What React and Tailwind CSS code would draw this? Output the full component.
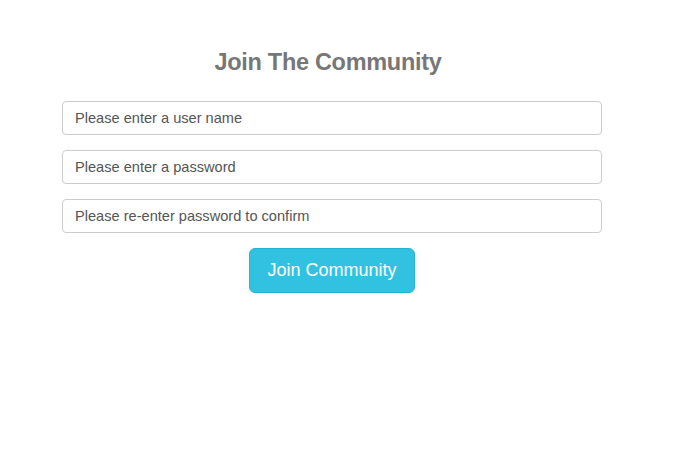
import React from 'react';

const fields = [
    'Please enter a user name',
    'Please enter a password',
    'Please re-enter password to confirm',
];

export default function App() {
    return (
        <div className="min-h-[460px] w-full bg-white font-['Liberation_Sans',Arial,sans-serif]">
            <div className="ml-[62px] w-[540px] pt-[47px]">
                <h2 className="pr-[8px] text-center text-[23.5px] font-bold leading-[30px] text-[#777] tracking-[-0.3px]">
                    Join The Community
                </h2>
                <form className="mt-[24px] flex flex-col gap-[15px]" onSubmit={(e) => e.preventDefault()}>
                    {fields.map((text) => (
                        <input
                            key={text}
                            type="text"
                            placeholder={text}
                            className="h-[34px] w-full rounded-[4px] border border-[#ccc] px-[12px] text-[14.6px] text-[#555] placeholder:text-[#555] outline-none"
                        />
                    ))}
                    <div className="flex justify-center">
                        <button
                            type="submit"
                            className="h-[45px] w-[166px] rounded-[6px] border border-[#26b4d4] bg-[#31c2e1] text-[18px] text-white"
                        >
                            Join Community
                        </button>
                    </div>
                </form>
            </div>
        </div>
    );
}
